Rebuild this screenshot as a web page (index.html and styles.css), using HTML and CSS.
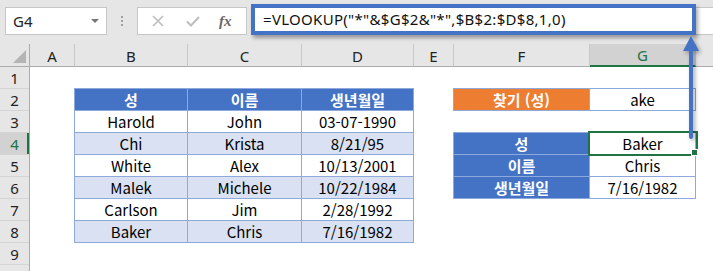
FILE: index.html
```html
<!DOCTYPE html>
<html lang="ko">
<head>
<meta charset="utf-8">
<link rel="stylesheet" href="styles.css">
</head>
<body>
<div class="toolbar">
  <div class="namebox"><span>G4</span><span class="caret"></span></div>
  <div class="grip"><i></i><i></i><i></i></div>
  <div class="fxbox">
    <svg class="ico" width="14" height="14" viewBox="0 0 14 14"><path d="M2 2L12 12M12 2L2 12" stroke="#bdbdbd" stroke-width="1.6" fill="none"/></svg>
    <svg class="ico" width="16" height="14" viewBox="0 0 16 14"><path d="M2 7.5L6 11.5L14 3" stroke="#bdbdbd" stroke-width="2" fill="none"/></svg>
    <span class="fx">fx</span>
  </div>
  <div class="formula">
    <div class="formula-hl">=VLOOKUP("*"&amp;$G$2&amp;"*",$B$2:$D$8,1,0)</div>
  </div>
</div>
<div class="sheet">
  <div class="corner"></div>
  <div class="colheads">
    <div class="ch w-a">A</div>
    <div class="ch w-b">B</div>
    <div class="ch w-c">C</div>
    <div class="ch w-d">D</div>
    <div class="ch w-e">E</div>
    <div class="ch w-f">F</div>
    <div class="ch w-g sel">G</div>
    <div class="ch w-h"></div>
  </div>
  <div class="rowheads">
    <div class="rh">1</div>
    <div class="rh">2</div>
    <div class="rh">3</div>
    <div class="rh sel">4</div>
    <div class="rh">5</div>
    <div class="rh">6</div>
    <div class="rh">7</div>
    <div class="rh">8</div>
    <div class="rh">9</div>
    <div class="rh">10</div>
  </div>
  <div class="cells">
    <div class="tbl t-data">
      <div class="c hd">성</div><div class="c hd">이름</div><div class="c hd">생년월일</div>
      <div class="c">Harold</div><div class="c">John</div><div class="c">03-07-1990</div>
      <div class="c alt">Chi</div><div class="c alt">Krista</div><div class="c alt">8/21/95</div>
      <div class="c">White</div><div class="c">Alex</div><div class="c">10/13/2001</div>
      <div class="c alt">Malek</div><div class="c alt">Michele</div><div class="c alt">10/22/1984</div>
      <div class="c">Carlson</div><div class="c">Jim</div><div class="c">2/28/1992</div>
      <div class="c alt">Baker</div><div class="c alt">Chris</div><div class="c alt">7/16/1982</div>
    </div>
    <div class="tbl t-find">
      <div class="c orange">찾기 (성)</div><div class="c">ake</div>
    </div>
    <div class="tbl t-res">
      <div class="c hd">성</div><div class="c active">Baker<span class="selbox"></span></div>
      <div class="c hd">이름</div><div class="c">Chris</div>
      <div class="c hd">생년월일</div><div class="c">7/16/1982</div>
    </div>
  </div>
</div>
<svg class="arrow" width="24" height="112" viewBox="0 0 24 112">
  <line x1="11" y1="18" x2="11" y2="107" stroke="#4472C4" stroke-width="4" stroke-linecap="round"/>
  <polygon points="11,6 3,21 19,21" fill="#4472C4"/>
</svg>
</body>
</html>
```

FILE: styles.css
```css
html, body {
  margin: 0;
  height: 100%;
  overflow: hidden;
}
body {
  background: #fff;
  font-family: "Noto Sans", "Noto Sans CJK KR", sans-serif;
  position: relative;
  color: #000;
}
.toolbar {
  height: 44px;
  box-sizing: border-box;
  background: #e6e6e6;
  display: flex;
  align-items: flex-start;
  padding-top: 7px;
}
.namebox {
  margin-left: 5px;
  width: 102px;
  height: 28px;
  box-sizing: border-box;
  background: #fff;
  border: 1px solid #c6c6c6;
  display: flex;
  align-items: center;
  justify-content: space-between;
  padding: 0 7px 0 7px;
  font-size: 15px;
  color: #222;
}
.caret {
  width: 0;
  height: 0;
  border-left: 4px solid transparent;
  border-right: 4px solid transparent;
  border-top: 4px solid #777;
}
.grip {
  width: 30px;
  height: 28px;
  display: flex;
  flex-direction: column;
  align-items: center;
  justify-content: center;
  gap: 2px;
}
.grip i {
  width: 2px;
  height: 2px;
  background: #a0a0a0;
}
.fxbox {
  width: 110px;
  height: 28px;
  box-sizing: border-box;
  background: #fff;
  border: 1px solid #c6c6c6;
  display: flex;
  align-items: center;
  padding-left: 13px;
}
.fxbox .ico {
  margin-right: 20px;
}
.fxbox .ico + .ico {
  margin-right: 18px;
}
.fx {
  font-family: "Liberation Serif", serif;
  font-style: italic;
  font-weight: 700;
  font-size: 15px;
  color: #666;
}
.formula {
  margin-left: 4px;
  flex: 1;
  height: 28px;
  box-sizing: border-box;
  background: #fff;
  border-top: 1px solid #c6c6c6;
  border-bottom: 1px solid #c6c6c6;
  position: relative;
}
.formula-hl {
  position: absolute;
  left: 0;
  top: -4px;
  width: 445px;
  height: 31px;
  box-sizing: border-box;
  border: 4px solid #4472C4;
  background: #fff;
  box-shadow: 2px 3px 4px rgba(0, 0, 0, 0.35);
  padding: 1px 0 0 8px;
  font-size: 15px;
  letter-spacing: 0.3px;
  line-height: 21px;
  color: #111;
  white-space: nowrap;
}
.sheet {
  display: grid;
  grid-template-columns: 30px 1fr;
  grid-template-rows: 23px 1fr;
  height: calc(100% - 44px);
}
.corner {
  background: #e6e6e6;
  border-right: 1px solid #ababab;
  border-bottom: 1px solid #ababab;
  position: relative;
}
.corner::after {
  content: "";
  position: absolute;
  right: 3px;
  bottom: 3px;
  width: 0;
  height: 0;
  border-left: 13px solid transparent;
  border-bottom: 13px solid #b4b4b4;
}
.colheads {
  display: flex;
  background: #e6e6e6;
}
.ch {
  height: 23px;
  box-sizing: border-box;
  border-right: 1px solid #c8c8c8;
  border-bottom: 1px solid #ababab;
  display: flex;
  align-items: center;
  justify-content: center;
  font-size: 15px;
  color: #222;
  padding-top: 1px;
}
.ch.sel {
  background: #d2d2d2;
  color: #217346;
  border-bottom: 2px solid #217346;
}
.w-a { width: 45px; }
.w-b { width: 113px; }
.w-c { width: 114px; }
.w-d { width: 112px; }
.w-e { width: 40px; }
.w-f { width: 136px; }
.w-g { width: 106px; }
.w-h { flex: 1; border-right: none; }
.rowheads {
  display: flex;
  flex-direction: column;
  background: #e6e6e6;
  border-right: 1px solid #ababab;
}
.rh {
  height: 22px;
  flex: none;
  box-sizing: border-box;
  border-bottom: 1px solid #d4d4d4;
  display: flex;
  align-items: center;
  justify-content: center;
  font-size: 15px;
  color: #222;
}
.rh.sel {
  background: #d2d2d2;
  color: #217346;
  box-shadow: inset -2px 0 0 #217346;
}
.cells {
  display: grid;
  grid-template-columns: 45px 113px 114px 112px 40px 136px 106px 1fr;
  grid-template-rows: repeat(10, 22px);
  background: #fff;
}
.tbl {
  display: grid;
  gap: 1px;
  padding: 1px;
  background: #8EA9DB;
  margin: -1px 0 0 -1px;
  grid-auto-rows: 21px;
}
.t-data {
  grid-column: 2 / 5;
  grid-row: 2 / 9;
  grid-template-columns: 112px 113px 1fr;
}
.t-find {
  grid-column: 6 / 8;
  grid-row: 2 / 3;
  grid-template-columns: 135px 1fr;
}
.t-res {
  grid-column: 6 / 8;
  grid-row: 4 / 7;
  grid-template-columns: 135px 1fr;
}
.c {
  background: #fff;
  display: flex;
  align-items: center;
  justify-content: center;
  font-family: "Noto Sans CJK KR", "Noto Sans", sans-serif;
  font-size: 15px;
  color: #000;
  white-space: nowrap;
}
.c.alt { background: #D9E1F2; }
.c.hd {
  background: #4472C4;
  color: #fff;
  font-weight: 700;
}
.c.orange {
  background: #ED7D31;
  color: #fff;
  font-weight: 700;
}
.c.active { position: relative; }
.selbox {
  position: absolute;
  left: -2px;
  top: -2px;
  width: 110px;
  height: 25px;
  box-sizing: border-box;
  border: 2px solid #217346;
}
.selbox::after {
  content: "";
  position: absolute;
  right: -2px;
  bottom: -2px;
  width: 5px;
  height: 5px;
  background: #217346;
  border: 1px solid #fff;
}
.arrow {
  position: absolute;
  left: 680px;
  top: 30px;
  filter: drop-shadow(2px 2px 2px rgba(0, 0, 0, 0.35));
}
```
